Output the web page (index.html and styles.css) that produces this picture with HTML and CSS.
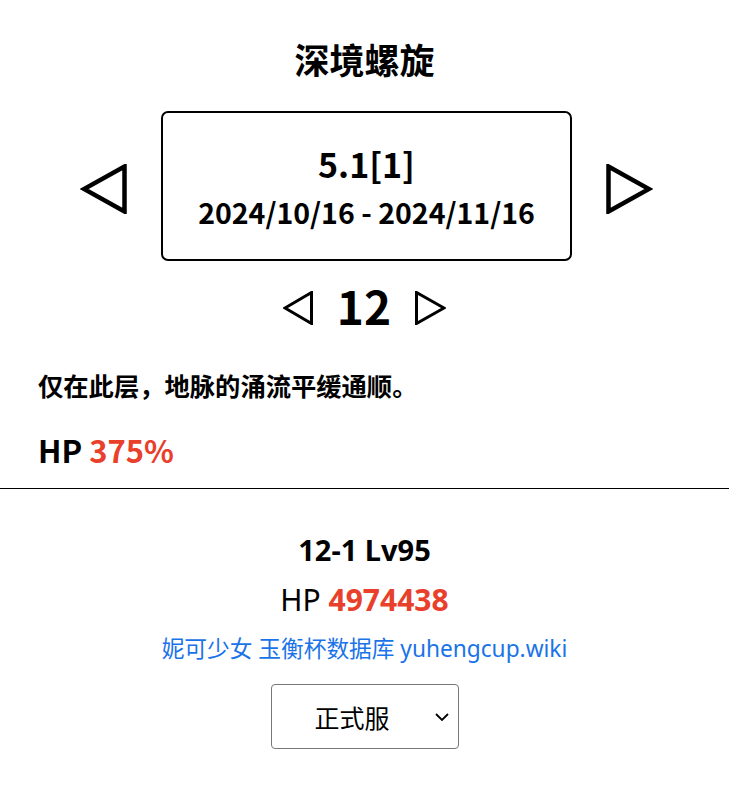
FILE: index.html
```html
<!DOCTYPE html>
<html lang="zh-CN">
<head>
<meta charset="utf-8">
<title>深境螺旋</title>
<link rel="stylesheet" href="styles.css">
</head>
<body>
<div class="top">
  <h1 class="title">深境螺旋</h1>
  <div class="season">
    <svg class="arrow-big" width="47" height="50" viewBox="0 0 47 50"><polygon points="44.5,2.5 44.5,47.5 4,25" fill="none" stroke="#000" stroke-width="4.5" stroke-linejoin="miter"/></svg>
    <div class="season-box">
      <div class="season-name">5.1[1]</div>
      <div class="season-date">2024/10/16 - 2024/11/16</div>
    </div>
    <svg class="arrow-big" width="47" height="50" viewBox="0 0 47 50"><polygon points="2.5,2.5 2.5,47.5 43,25" fill="none" stroke="#000" stroke-width="4.5" stroke-linejoin="miter"/></svg>
  </div>
  <div class="floor">
    <svg class="arrow-small" width="30" height="34" viewBox="0 0 30 34"><polygon points="28.5,1.5 28.5,32.5 2,17" fill="none" stroke="#000" stroke-width="3"/></svg>
    <span class="floor-num">12</span>
    <svg class="arrow-small" width="31" height="34" viewBox="0 0 31 34"><polygon points="1.5,1.5 1.5,32.5 29,17" fill="none" stroke="#000" stroke-width="3"/></svg>
  </div>
  <p class="desc">仅在此层，地脉的涌流平缓通顺。</p>
  <p class="hp-mult">HP <span class="red">375%</span></p>
</div>
<hr class="divider">
<div class="bottom">
  <div class="stage">12-1 Lv95</div>
  <div class="stage-hp">HP <span class="red bold">4974438</span></div>
  <a class="wiki" href="#">妮可少女 玉衡杯数据库 yuhengcup.wiki</a>
  <div class="select-wrap">
    <div class="select">
      <span class="select-text">正式服</span>
      <svg class="chev" width="14" height="8" viewBox="0 0 14 8"><polyline points="1,1 7,7 13,1" fill="none" stroke="#000" stroke-width="1.8"/></svg>
    </div>
  </div>
</div>
</body>
</html>
```
FILE: styles.css
```css
html, body {
  margin: 0;
  padding: 0;
  background: #fff;
  color: #000;
}
body {
  font-family: "Noto Sans CJK SC", "Noto Sans", sans-serif;
}
.top {
  padding: 0 38px;
}
.title {
  margin: 0;
  padding-top: 34px;
  font-size: 35px;
  line-height: 50px;
  font-weight: 700;
  text-align: center;
}
.season {
  display: flex;
  justify-content: center;
  align-items: center;
  gap: 34px;
  margin-top: 27px;
  margin-left: 4px;
}
.arrow-big {
  display: block;
  margin-top: 5px;
}
.season-box {
  box-sizing: border-box;
  width: 411px;
  height: 150px;
  border: 2px solid #000;
  border-radius: 7px;
  display: flex;
  flex-direction: column;
  align-items: center;
  padding-top: 28px;
}
.season-name {
  font-size: 34px;
  font-weight: 700;
  line-height: 46px;
}
.season-date {
  font-size: 28.5px;
  font-weight: 700;
  line-height: 38px;
  margin-top: 6px;
}
.floor {
  display: flex;
  justify-content: center;
  align-items: center;
  gap: 24px;
  margin-top: 17px;
}
.arrow-small {
  display: block;
  margin-top: 6px;
}
.floor-num {
  font-size: 46px;
  font-weight: 700;
  line-height: 54px;
}
.desc {
  margin: 35px 0 0;
  font-size: 25.3px;
  font-weight: 700;
  line-height: 36px;
}
.hp-mult {
  margin: 26px 0 0;
  font-size: 31px;
  font-weight: 700;
  line-height: 42px;
}
.red {
  color: #e8402a;
}
.bold {
  font-weight: 700;
}
.divider {
  margin: 17px 0 0;
  border: 0;
  border-top: 1px solid #000;
  height: 0;
}
.bottom {
  font-family: "Noto Sans", "Noto Sans CJK SC", sans-serif;
  text-align: center;
  padding-top: 41px;
  display: flex;
  flex-direction: column;
  align-items: center;
}
.stage {
  font-size: 29px;
  font-weight: 700;
  line-height: 40px;
}
.stage-hp {
  font-size: 30px;
  line-height: 42px;
  margin-top: 9px;
}
.wiki {
  font-size: 22.7px;
  line-height: 34px;
  color: #1a73e8;
  text-decoration: none;
  margin-top: 11px;
}
.select-wrap {
  margin-top: 18px;
}
.select {
  box-sizing: border-box;
  width: 188px;
  height: 65px;
  border: 1px solid #777;
  border-radius: 4px;
  display: flex;
  align-items: center;
  padding-left: 43px;
  padding-right: 9px;
}
.select-text {
  font-size: 25px;
  font-family: "Noto Sans CJK SC", sans-serif;
  flex: 1;
  text-align: left;
}
.chev {
  display: block;
}
```
